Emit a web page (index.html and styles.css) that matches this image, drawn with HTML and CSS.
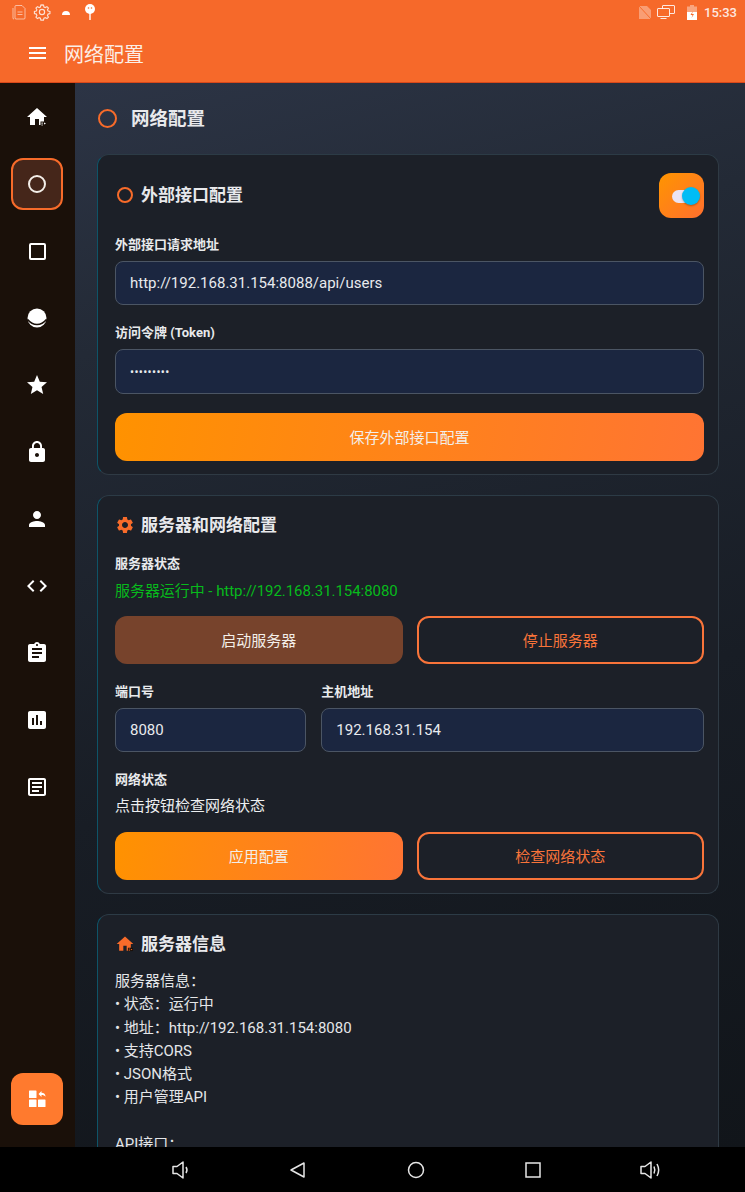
FILE: index.html
```html
<!DOCTYPE html>
<html lang="zh-CN">
<head>
    <meta charset="UTF-8">
    <meta name="viewport" content="width=device-width, initial-scale=1.0">
    <title>网络配置</title>
    <link rel="stylesheet" href="styles.css">
</head>
<body>
    <svg class="sprites" width="0" height="0">
        <symbol id="i-home" viewBox="0 0 24 24"><path d="M10 20v-6h4v6h5v-8h3L12 3 2 12h3v8z"/><path d="M15.5 16.5h6v4h-6z" fill="#1a1009"/><path d="M16.5 17.5h1.2v1.2h-1.2zM19 17.6l2 1-2 1zM16.5 19.5h1.2v1h-1.2z"/></symbol>
        <symbol id="i-star" viewBox="0 0 24 24"><path d="M12 17.27L18.18 21l-1.64-7.03L22 9.24l-7.19-.61L12 2 9.19 8.63 2 9.24l5.46 4.73L5.82 21z"/></symbol>
        <symbol id="i-lock" viewBox="0 0 24 24"><path d="M18 8h-1V6c0-2.76-2.24-5-5-5S7 3.24 7 6v2H6c-1.1 0-2 .9-2 2v10c0 1.1.9 2 2 2h12c1.1 0 2-.9 2-2V10c0-1.1-.9-2-2-2zm-6 9c-1.1 0-2-.9-2-2s.9-2 2-2 2 .9 2 2-.9 2-2 2zm3.1-9H8.9V6c0-1.71 1.39-3.1 3.1-3.1 1.71 0 3.1 1.39 3.1 3.1v2z"/></symbol>
        <symbol id="i-person" viewBox="0 0 24 24"><path d="M12 12c2.21 0 4-1.79 4-4s-1.79-4-4-4-4 1.79-4 4 1.79 4 4 4zm0 2c-2.67 0-8 1.34-8 4v2h16v-2c0-2.66-5.33-4-8-4z"/></symbol>
        <symbol id="i-code" viewBox="0 0 24 24"><path d="M9.4 16.6L4.8 12l4.6-4.6L8 6l-6 6 6 6 1.4-1.4zm5.2 0l4.6-4.6-4.6-4.6L16 6l6 6-6 6-1.4-1.4z"/></symbol>
        <symbol id="i-assignment" viewBox="0 0 24 24"><path d="M19 3h-4.18C14.4 1.84 13.3 1 12 1c-1.3 0-2.4.84-2.82 2H5c-1.1 0-2 .9-2 2v14c0 1.1.9 2 2 2h14c1.1 0 2-.9 2-2V5c0-1.1-.9-2-2-2zm-7 0c.55 0 1 .45 1 1s-.45 1-1 1-1-.45-1-1 .45-1 1-1zm2 14H7v-2h7v2zm3-4H7v-2h10v2zm0-4H7V7h10v2z"/></symbol>
        <symbol id="i-assessment" viewBox="0 0 24 24"><path d="M19 3H5c-1.1 0-2 .9-2 2v14c0 1.1.9 2 2 2h14c1.1 0 2-.9 2-2V5c0-1.1-.9-2-2-2zM9 17H7v-7h2v7zm4 0h-2V7h2v10zm4 0h-2v-4h2v4z"/></symbol>
        <symbol id="i-article" viewBox="0 0 24 24"><path d="M19 5v14H5V5h14m0-2H5c-1.1 0-2 .9-2 2v14c0 1.1.9 2 2 2h14c1.1 0 2-.9 2-2V5c0-1.1-.9-2-2-2z"/><path d="M14 17H7v-2h7v2zm3-4H7v-2h10v2zm0-4H7V7h10v2z"/></symbol>
        <symbol id="i-gear" viewBox="0 0 24 24"><path d="M19.14 12.94c.04-.3.06-.61.06-.94 0-.32-.02-.64-.07-.94l2.03-1.58c.18-.14.23-.41.12-.61l-1.92-3.32c-.12-.22-.37-.29-.59-.22l-2.39.96c-.5-.38-1.03-.7-1.62-.94l-.36-2.54c-.04-.24-.24-.41-.48-.41h-3.84c-.24 0-.43.17-.47.41l-.36 2.54c-.59.24-1.13.57-1.62.94l-2.39-.96c-.22-.08-.47 0-.59.22L2.74 8.87c-.12.21-.08.47.12.61l2.03 1.58c-.05.3-.09.63-.09.94s.02.64.07.94l-2.03 1.58c-.18.14-.23.41-.12.61l1.92 3.32c.12.22.37.29.59.22l2.39-.96c.5.38 1.03.7 1.62.94l.36 2.54c.05.24.24.41.48.41h3.84c.24 0 .44-.17.47-.41l.36-2.54c.59-.24 1.13-.56 1.62-.94l2.39.96c.22.08.47 0 .59-.22l1.92-3.32c.12-.22.07-.47-.12-.61l-2.01-1.58zM12 15.6c-1.98 0-3.6-1.62-3.6-3.6s1.62-3.6 3.6-3.6 3.6 1.62 3.6 3.6-1.62 3.6-3.6 3.6z"/></symbol>
    </svg>

    <header class="topbar">
        <div class="statusbar">
            <div class="status-left">
                <svg class="st-icon" width="14" height="16" viewBox="0 0 14 16" fill="none" stroke="#fff" stroke-opacity=".55"><path d="M4 1.5h6l3 3V14a1 1 0 0 1-1 1H4a1 1 0 0 1-1-1V2.500a1 1 0 0 1 1-1z"/><path d="M1 4v10a1.500 1.500 0 0 0 1 1.300M5.500 8h5M5.500 10.500h5"/></svg>
                <svg class="st-icon" width="18" height="18" viewBox="0 0 24 24" fill="none" stroke="#fff" stroke-opacity=".8" stroke-width="1.500"><path d="M12 2.500l2 .3.600 2.500 1.800.8 2.200-1.300 2 2-1.300 2.200.8 1.800 2.500.6v2.800l-2.500.6-.8 1.800 1.300 2.200-2 2-2.200-1.300-1.800.8-.6 2.500H10.500l-.6-2.500-1.800-.8-2.200 1.300-2-2 1.300-2.200-.8-1.800-2.500-.6v-2.800l2.500-.6.8-1.800-1.300-2.200 2-2 2.200 1.300 1.800-.8.6-2.500z"/><circle cx="12" cy="12" r="3.500"/></svg>
                <svg class="st-icon st-dash" width="8" height="6" viewBox="0 0 8 6" fill="#fff"><path d="M0 6a4 4 0 0 1 8 0z"/></svg>
                <svg class="st-icon st-pin" width="12" height="18" viewBox="0 0 12 18" fill="#fff"><circle cx="6" cy="6" r="5"/><rect x="5" y="10" width="2" height="7" opacity=".7"/><circle cx="4.500" cy="5" r=".8" fill="#f76b2a"/><circle cx="7.500" cy="5" r=".8" fill="#f76b2a"/></svg>
            </div>
            <div class="status-right">
                <svg class="st-sim" width="12" height="13" viewBox="0 0 12 13" fill="#fff" fill-opacity=".35"><path d="M0 0h8l4 4v9H0z"/><path d="M0 0l12 13" stroke="#f76b2a" stroke-width="1"/></svg>
                <svg class="st-win" width="18" height="14" viewBox="0 0 18 14" fill="none" stroke="#fff" stroke-opacity=".85"><rect x="5.500" y=".5" width="12" height="8" rx=".5"/><rect x=".5" y="3.500" width="12" height="8" rx=".5" fill="#f76b2a"/><path d="M3.500 13.500h6"/></svg>
                <svg class="st-batt" width="10" height="15" viewBox="0 0 10 15"><path d="M3 0h4v1.500h3V15H0V1.500h3z" fill="#fff" fill-opacity=".4"/><path d="M0 7h10v8H0z" fill="#fff"/><path d="M6 6L3.500 10h2L4.500 13 7 9H5z" fill="#f76b2a"/></svg>
                <span class="clock">15:33</span>
            </div>
        </div>
        <div class="appbar">
            <span class="menu-btn"><i></i><i></i><i></i></span>
            <h1 class="app-title">网络配置</h1>
        </div>
    </header>

    <div class="middle">
        <nav class="sidebar">
            <a class="nav-item"><svg class="nav-icon"><use href="#i-home"/></svg></a>
            <a class="nav-item active"><span class="ring-icon"></span></a>
            <a class="nav-item"><span class="square-icon"></span></a>
            <a class="nav-item">
                <svg class="nav-icon" viewBox="0 0 24 24"><circle cx="12" cy="12" r="9.500"/><path d="M2.500 13.500c2.500 3 5.500 5 9.500 5s7-2 9.500-5" fill="none" stroke="#1a1009" stroke-width="1.700"/></svg>
            </a>
            <a class="nav-item"><svg class="nav-icon"><use href="#i-star"/></svg></a>
            <a class="nav-item"><svg class="nav-icon"><use href="#i-lock"/></svg></a>
            <a class="nav-item"><svg class="nav-icon"><use href="#i-person"/></svg></a>
            <a class="nav-item"><svg class="nav-icon"><use href="#i-code"/></svg></a>
            <a class="nav-item"><svg class="nav-icon"><use href="#i-assignment"/></svg></a>
            <a class="nav-item"><svg class="nav-icon"><use href="#i-assessment"/></svg></a>
            <a class="nav-item"><svg class="nav-icon"><use href="#i-article"/></svg></a>
            <a class="nav-item nav-bottom">
                <svg class="nav-icon" viewBox="0 0 24 24"><rect x="4" y="3.500" width="7.500" height="7.500" rx=".6"/><rect x="4" y="12.500" width="7.500" height="7.500" rx=".6"/><rect x="13" y="12.500" width="7.500" height="7.500" rx=".6"/><path d="M13.500 7l3-3v1.800c2.500 0 4 1.500 4 4-.8-1.300-2-1.800-4-1.800V10z"/></svg>
            </a>
        </nav>

        <main class="content">
            <div class="page-title">
                <span class="title-ring"></span>
                <h2>网络配置</h2>
            </div>

            <section class="card">
                <div class="card-head">
                    <span class="head-ring"></span>
                    <h3>外部接口配置</h3>
                    <button class="toggle-btn"><span class="track"></span><span class="thumb"></span></button>
                </div>
                <label class="field-label">外部接口请求地址</label>
                <div class="input">http://192.168.31.154:8088/api/users</div>
                <label class="field-label label-gap">访问令牌 (Token)</label>
                <div class="input input-pw">•••••••••</div>
                <button class="btn btn-primary btn-save">保存外部接口配置</button>
            </section>

            <section class="card">
                <div class="card-head head-low">
                    <svg class="head-icon"><use href="#i-gear"/></svg>
                    <h3>服务器和网络配置</h3>
                </div>
                <div class="field-label status-label">服务器状态</div>
                <div class="status-ok">服务器运行中 - http://192.168.31.154:8080</div>
                <div class="btn-row">
                    <button class="btn btn-muted">启动服务器</button>
                    <button class="btn btn-outline">停止服务器</button>
                </div>
                <div class="host-row">
                    <div>
                        <label class="field-label">端口号</label>
                        <div class="input">8080</div>
                    </div>
                    <div>
                        <label class="field-label">主机地址</label>
                        <div class="input">192.168.31.154</div>
                    </div>
                </div>
                <div class="field-label net-label">网络状态</div>
                <div class="net-text">点击按钮检查网络状态</div>
                <div class="btn-row">
                    <button class="btn btn-primary">应用配置</button>
                    <button class="btn btn-outline">检查网络状态</button>
                </div>
            </section>

            <section class="card">
                <div class="card-head head-low">
                    <svg class="head-icon head-home"><use href="#i-home"/></svg>
                    <h3>服务器信息</h3>
                </div>
                <div class="info">服务器信息：
• 状态：运行中
• 地址：http://192.168.31.154:8080
• 支持CORS
• JSON格式
• 用户管理API

API接口：</div>
            </section>
        </main>
    </div>

    <footer class="navbar">
        <svg width="20" height="20" viewBox="0 0 20 20" fill="none" stroke="#e6e6e6" stroke-width="1.500"><path d="M2 6.500h4L12 2v16l-6-4.500H2z" stroke-linejoin="round"/><path d="M15 7c1.200 1.800 1.200 4.200 0 6"/></svg>
        <svg width="18" height="18" viewBox="0 0 18 18" fill="none" stroke="#e6e6e6" stroke-width="1.500"><path d="M15 2v14L2 9z" stroke-linejoin="round"/></svg>
        <svg width="18" height="18" viewBox="0 0 18 18" fill="none" stroke="#e6e6e6" stroke-width="1.500"><circle cx="9" cy="9" r="7.500"/></svg>
        <svg width="16" height="16" viewBox="0 0 16 16" fill="none" stroke="#e6e6e6" stroke-width="1.500"><rect x="1" y="1" width="14" height="14"/></svg>
        <svg width="24" height="20" viewBox="0 0 24 20" fill="none" stroke="#e6e6e6" stroke-width="1.500"><path d="M2 6.500h4L12 2v16l-6-4.500H2z" stroke-linejoin="round"/><path d="M15 6.500c1 2.200 1 4.800 0 7M18 4c2 3.600 2 8.400 0 12"/></svg>
    </footer>
</body>
</html>
```
FILE: styles.css
```css
* {
    box-sizing: border-box;
}

html, body {
    margin: 0;
    padding: 0;
    height: 100%;
}

body {
    display: flex;
    flex-direction: column;
    height: 100vh;
    overflow: hidden;
    font-family: Roboto, "Noto Sans CJK SC", sans-serif;
    font-size: 15px;
    color: #eceef0;
    background-color: #000;
}

.sprites {
    position: absolute;
}

/* top */
.topbar {
    height: 83px;
    flex: none;
    background-color: #f6692a;
    border-bottom: 1px solid #d9481a;
    color: #fff;
}

.statusbar {
    height: 24px;
    display: flex;
    justify-content: space-between;
    align-items: center;
    padding: 0 8px 0 12px;
}

.status-left, .status-right {
    display: flex;
    align-items: center;
}

.status-left {
    gap: 7px;
}

.st-dash {
    margin-left: 4px;
    margin-right: 7px;
}

.st-win {
    margin-left: 6px;
    margin-right: 12px;
}

.clock {
    margin-left: 7px;
    font-size: 13px;
    font-weight: 500;
    opacity: .85;
}

.appbar {
    height: 58px;
    display: flex;
    align-items: center;
    padding: 0 0 0 29px;
}

.menu-btn {
    width: 17px;
    display: flex;
    flex-direction: column;
    gap: 3px;
    margin-right: 18px;
}

.menu-btn i {
    display: block;
    height: 2px;
    background-color: #fff;
}

.app-title {
    margin: 0;
    font-size: 20px;
    font-weight: 400;
    color: #fbeee6;
}

/* sidebar + content */
.middle {
    flex: 1;
    min-height: 0;
    display: flex;
}

.sidebar {
    width: 75px;
    flex: none;
    display: flex;
    flex-direction: column;
    align-items: flex-start;
    gap: 15px;
    padding: 8px 0 22px 11px;
    background-color: #1a1009;
}

.nav-item {
    width: 52px;
    height: 52px;
    flex: none;
    display: flex;
    align-items: center;
    justify-content: center;
    border-radius: 12px;
}

.nav-item.active {
    background-color: #45261a;
    border: 2px solid #f76b2a;
}

.nav-bottom {
    margin-top: auto;
    background-color: #ff7a2e;
}

.nav-icon {
    width: 24px;
    height: 24px;
    fill: #fff;
}

.ring-icon {
    width: 18px;
    height: 18px;
    border: 2px solid #f4efe9;
    border-radius: 50%;
}

.square-icon {
    width: 17px;
    height: 17px;
    border: 2px solid #fff;
    border-radius: 2px;
}

.content {
    flex: 1;
    min-width: 0;
    overflow: hidden;
    padding: 0 26px 0 22px;
    background: linear-gradient(165deg, #2c3445 0%, #232a36 22%, #181d25 60%, #11151a 100%);
}

.page-title {
    height: 71px;
    display: flex;
    align-items: center;
    padding-left: 1px;
}

.title-ring {
    width: 19px;
    height: 19px;
    border: 2px solid #f76b2a;
    border-radius: 50%;
    margin-right: 14px;
}

.page-title h2 {
    margin: 0;
    line-height: 24px;
    font-size: 18.5px;
    font-weight: 700;
    color: #e8e9ec;
}

.card {
    background-color: #1c2028;
    border: 1px solid #2f3a44;
    border-left-color: #0e5468;
    border-top-color: #2c3b46;
    border-radius: 12px;
    padding: 0 14px 13px 17px;
    margin-bottom: 20px;
}

.card-head {
    height: 80px;
    display: flex;
    align-items: center;
}

.head-low {
    height: 58px;
}

.head-ring {
    width: 16px;
    height: 16px;
    border: 2px solid #f76b2a;
    border-radius: 50%;
    margin-left: 2px;
    margin-right: 8px;
}

.head-icon {
    width: 20px;
    height: 20px;
    fill: #f76b2a;
    margin-right: 6px;
}

.card-head h3 {
    margin: 0;
    line-height: 22px;
    font-size: 17px;
    font-weight: 700;
    color: #e8e9ec;
}

.toggle-btn {
    width: 45px;
    height: 45px;
    margin-left: auto;
    position: relative;
    padding: 0;
    border: none;
    border-radius: 12px;
    background: linear-gradient(135deg, #ff9500, #ff6f2e);
}

.track {
    position: absolute;
    left: 13px;
    top: 17px;
    width: 22px;
    height: 13px;
    border-radius: 7px;
    background-color: #ebe3f2;
}

.thumb {
    position: absolute;
    left: 23px;
    top: 14px;
    width: 18px;
    height: 18px;
    border-radius: 50%;
    background-color: #00bcf5;
    box-shadow: 0 1px 2px rgba(0, 0, 0, .3);
}

.field-label {
    display: block;
    height: 20px;
    line-height: 20px;
    font-size: 13px;
    font-weight: 700;
    color: #e8eaec;
    margin-bottom: 6px;
}

.label-gap {
    margin-top: 18px;
}

.input {
    height: 44px;
    line-height: 43px;
    padding: 0 14px;
    background-color: #1b2640;
    border: 1px solid #4b5564;
    border-radius: 8px;
    font-size: 15px;
    color: #e8eaee;
}

.input-pw {
    height: 45px;
    line-height: 45px;
    font-size: 12px;
    letter-spacing: .35px;
}

.btn {
    height: 48px;
    padding: 0 0 2px;
    border-radius: 12px;
    border: none;
    font-family: inherit;
    font-size: 15px;
    font-weight: 400;
    color: #f3efe9;
}

.btn-primary {
    background: linear-gradient(100deg, #ff9200, #ff7433);
}

.btn-save {
    width: 100%;
    display: block;
    margin-top: 19px;
}

.btn-muted {
    background-color: #77432c;
}

.btn-outline {
    background: transparent;
    border: 2px solid #f9743a;
    color: #f9743a;
}

.btn-row {
    display: grid;
    grid-template-columns: 1fr 1fr;
    gap: 14px;
}

.status-label {
    margin-bottom: 0;
}

.status-ok {
    height: 23px;
    line-height: 23px;
    margin-top: 6px;
    margin-bottom: 13px;
    letter-spacing: -.05px;
    color: #07ba1c;
}

.host-row {
    display: grid;
    grid-template-columns: 1fr 2fr;
    gap: 15px;
    margin-top: 18px;
}

.net-label {
    margin-top: 18px;
    margin-bottom: 0;
}

.net-text {
    height: 23px;
    line-height: 23px;
    margin-top: 5px;
    margin-bottom: 14px;
}

.info {
    white-space: pre-line;
    line-height: 23.3px;
    margin-top: -3px;
    color: #e4e6e8;
}

/* android nav */
.navbar {
    height: 45px;
    flex: none;
    display: grid;
    grid-template-columns: repeat(5, 117.5px);
    justify-items: center;
    align-items: center;
    background-color: #000;
    padding-left: 122px;
}
```
